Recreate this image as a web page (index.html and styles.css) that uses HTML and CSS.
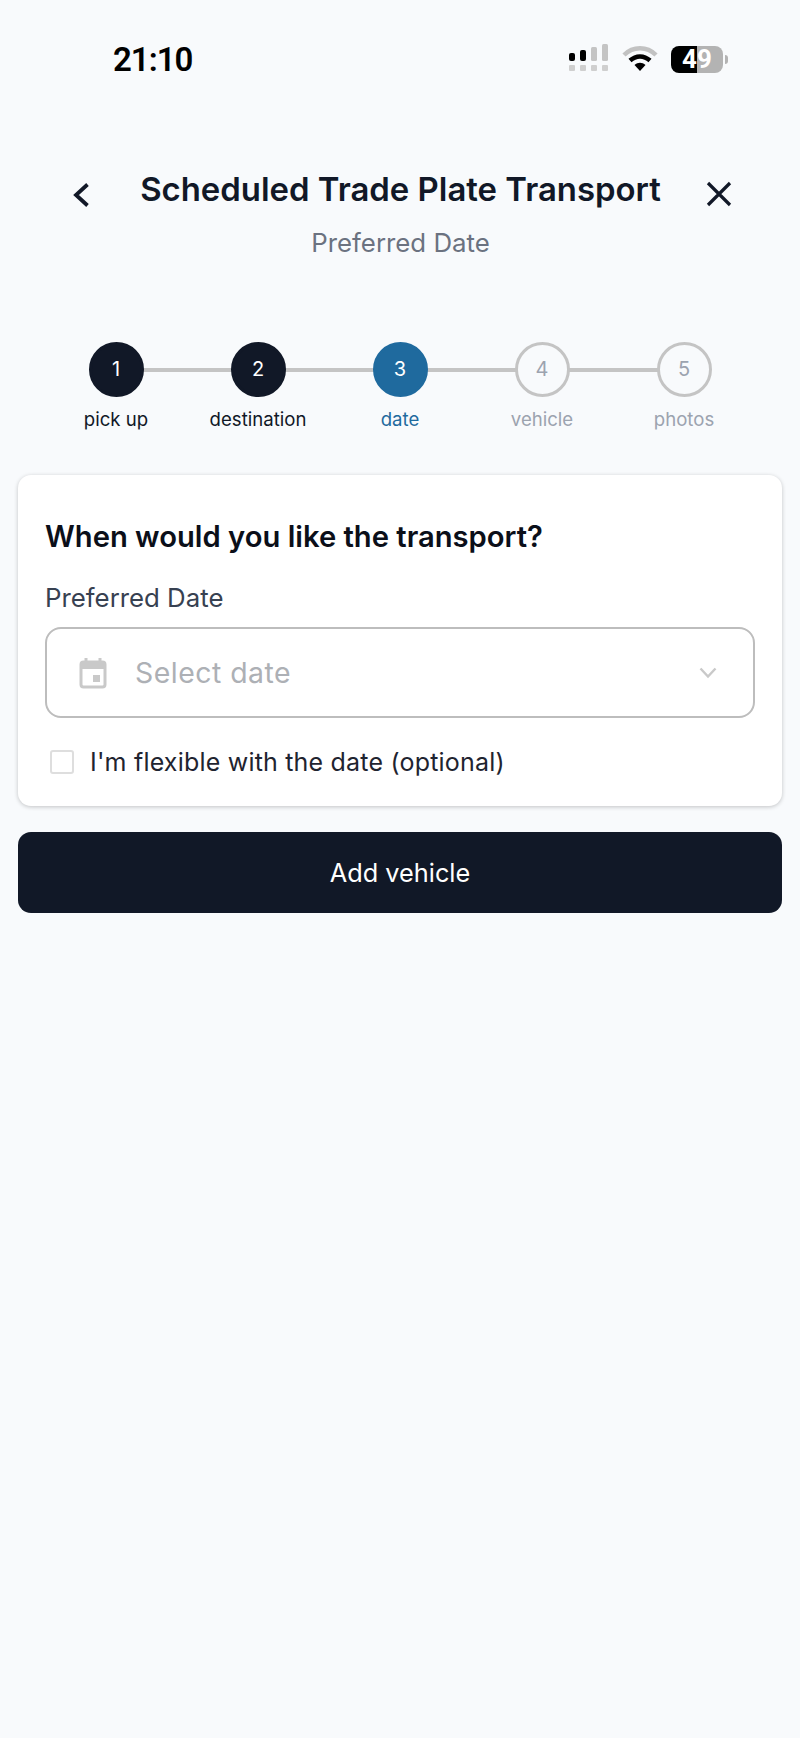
FILE: index.html
```html
<!DOCTYPE html>
<html>
<head>
    <title>Scheduled Trade Plate Transport</title>
    <link rel="stylesheet" href="styles.css">
</head>
<body>
    <div class="status-bar">
        <span class="time">21:10</span>
        <div class="status-icons">
            <svg width="40" height="30" viewBox="0 0 40 30">
                <rect x="1" y="9" width="6" height="8" rx="2" fill="#000"/>
                <rect x="12" y="6" width="6" height="11" rx="2" fill="#000"/>
                <rect x="23" y="3" width="6" height="14" rx="1.5" fill="#c4c4c4"/>
                <rect x="34" y="0" width="6" height="17" rx="1.5" fill="#c4c4c4"/>
                <rect x="1" y="21" width="6" height="6" rx="1" fill="#cfcfcf"/>
                <rect x="12" y="21" width="6" height="6" rx="1" fill="#cfcfcf"/>
                <rect x="23" y="21" width="6" height="6" rx="1" fill="#cfcfcf"/>
                <rect x="34" y="21" width="6" height="6" rx="1" fill="#cfcfcf"/>
            </svg>
            <svg class="wifi" width="36" height="26" viewBox="0 0 36 26">
                <path d="M2 9 C11 0 25 0 34 9" fill="none" stroke="#c2c2c2" stroke-width="4.5"/>
                <path d="M8 14.5 C14 9 22 9 28 14.5" fill="none" stroke="#000" stroke-width="4.5"/>
                <path d="M12.5 19 C16 16 20 16 23.500 19 L18 25 Z" fill="#000"/>
            </svg>
            <div class="battery">49</div>
            <div class="battery-cap"></div>
        </div>
    </div>

    <div class="header">
        <svg class="back" width="18" height="26" viewBox="0 0 18 26">
            <path d="M15.500 2.500 L4 13 L15.500 23.500" fill="none" stroke="#111827" stroke-width="3.800"/>
        </svg>
        <div class="header-text">
            <h1>Scheduled Trade Plate Transport</h1>
            <p>Preferred Date</p>
        </div>
        <svg class="close" width="28" height="28" viewBox="0 0 28 28">
            <path d="M3 3 L25 25 M25 3 L3 25" fill="none" stroke="#111827" stroke-width="3.200"/>
        </svg>
    </div>

    <div class="stepper">
        <div class="step done"><div class="circle">1</div><span>pick up</span></div>
        <div class="step done"><div class="circle">2</div><span>destination</span></div>
        <div class="step active"><div class="circle">3</div><span>date</span></div>
        <div class="step"><div class="circle">4</div><span>vehicle</span></div>
        <div class="step last"><div class="circle">5</div><span>photos</span></div>
    </div>

    <div class="card">
        <h2>When would you like the transport?</h2>
        <div class="field-label">Preferred Date</div>
        <div class="select">
            <svg width="28" height="32" viewBox="0 0 28 32">
                <path d="M7 1 V6 M21 1 V6" stroke="#c9c9c9" stroke-width="3"/>
                <rect x="2" y="5" width="24" height="25" rx="2.500" fill="none" stroke="#c9c9c9" stroke-width="3"/>
                <rect x="2" y="5" width="24" height="7" fill="#c9c9c9"/>
                <rect x="14" y="18" width="7" height="7" fill="#c9c9c9"/>
            </svg>
            <span class="placeholder">Select date</span>
            <svg class="chevron" width="18" height="12" viewBox="0 0 18 12">
                <path d="M1.500 1.500 L9 9.500 L16.500 1.500" fill="none" stroke="#c9c9c9" stroke-width="2.400"/>
            </svg>
        </div>
        <label class="check-row">
            <span class="checkbox"></span>
            <span>I'm flexible with the date (optional)</span>
        </label>
    </div>

    <button class="primary">Add vehicle</button>
</body>
</html>
```

FILE: styles.css
```css
body {
    margin: 0;
    height: 1738px;
    background: #f8fafc;
    font-family: Inter, "Liberation Sans", sans-serif;
    color: #111827;
}

.status-bar {
    display: flex;
    justify-content: space-between;
    align-items: center;
    height: 34px;
    padding: 42px 72px 0 113px;
}
.time {
    font-family: Roboto, sans-serif;
    font-size: 33px;
    font-weight: 600;
    color: #000;
    letter-spacing: -1px;
}
.status-icons {
    display: flex;
    align-items: center;
}
.wifi {
    margin: 0 13px 0 14px;
}
.battery {
    width: 52px;
    height: 27px;
    border-radius: 8px;
    background: linear-gradient(to right, #000 0 50%, #b3b3b3 50% 100%);
    color: #fff;
    font-family: Roboto, sans-serif;
    font-size: 26px;
    font-weight: 700;
    line-height: 27px;
    text-align: center;
}
.battery-cap {
    width: 3px;
    height: 9px;
    margin-left: 2px;
    border-radius: 0 3px 3px 0;
    background: #b3b3b3;
}

.header {
    display: grid;
    grid-template-columns: 1fr auto 1fr;
    align-items: start;
    margin-top: 94px;
    padding: 0 67px 0 68px;
}
.back {
    margin: 12px 0 0 4px;
}
.close {
    justify-self: end;
    margin-top: 10px;
}
.header-text {
    text-align: center;
}
.header h1 {
    margin: 0;
    font-size: 32.9px;
    font-weight: 600;
    line-height: 38px;
    white-space: nowrap;
}
.header p {
    margin: 20px 0 0;
    font-size: 25.8px;
    line-height: 30px;
    color: #6b7280;
}

.stepper {
    display: flex;
    justify-content: center;
    margin-top: 84px;
}
.step {
    position: relative;
    display: flex;
    flex-direction: column;
    align-items: center;
    width: 142px;
    font-size: 18.6px;
    color: #9ca3af;
}
/* line running to the next step */
.step::after {
    content: "";
    position: absolute;
    top: 26px;
    left: 71px;
    width: 142px;
    height: 4px;
    background: #c4c4c4;
}
.step.last::after {
    display: none;
}
.circle {
    position: relative;
    z-index: 1;
    box-sizing: border-box;
    width: 55px;
    height: 55px;
    border: 3px solid #c4c4c4;
    border-radius: 50%;
    background: #f8fafc;
    font-size: 20px;
    line-height: 49px;
    text-align: center;
    color: #9ca3af;
}
.step span {
    margin-top: 9px;
    line-height: 26px;
}
.step.done span {
    color: #111827;
}
.step.done .circle {
    background: #111827;
    border-color: #111827;
    color: #fff;
}
.step.active span {
    color: #1f6a9e;
}
.step.active .circle {
    background: #1f6a9e;
    border-color: #1f6a9e;
    color: #fff;
}

.card {
    box-sizing: border-box;
    height: 331px;
    margin: 43px 18px 0;
    padding: 44px 27px 0;
    border-radius: 13px;
    background: #fff;
    box-shadow: 0 1px 4px rgba(0, 0, 0, 0.22);
}
.card h2 {
    margin: 0;
    font-size: 29.2px;
    font-weight: 600;
    line-height: 36px;
    color: #0b0f19;
}
.field-label {
    margin-top: 28px;
    font-size: 25.8px;
    line-height: 30px;
    color: #374151;
}
.select {
    box-sizing: border-box;
    display: flex;
    align-items: center;
    height: 91px;
    margin-top: 14px;
    padding: 0 36px 0 32px;
    border: 2px solid #bdbdbd;
    border-radius: 16px;
}
.placeholder {
    flex: 1;
    margin-left: 28px;
    font-size: 28.4px;
    letter-spacing: 0.5px;
    color: #adb0b5;
}
.check-row {
    display: flex;
    align-items: center;
    margin-top: 29px;
    margin-left: 5px;
    font-size: 25px;
    letter-spacing: 0.2px;
    line-height: 30px;
    color: #1f2430;
}
.checkbox {
    box-sizing: border-box;
    width: 24px;
    height: 24px;
    margin-right: 16px;
    border: 2px solid #dedede;
    border-radius: 3px;
}

.primary {
    display: block;
    width: 764px;
    height: 81px;
    margin: 26px 18px 0;
    border: 0;
    border-radius: 13px;
    background: #111827;
    color: #fff;
    font-family: Inter, "Liberation Sans", sans-serif;
    font-size: 25.3px;
    font-weight: 400;
}
```
